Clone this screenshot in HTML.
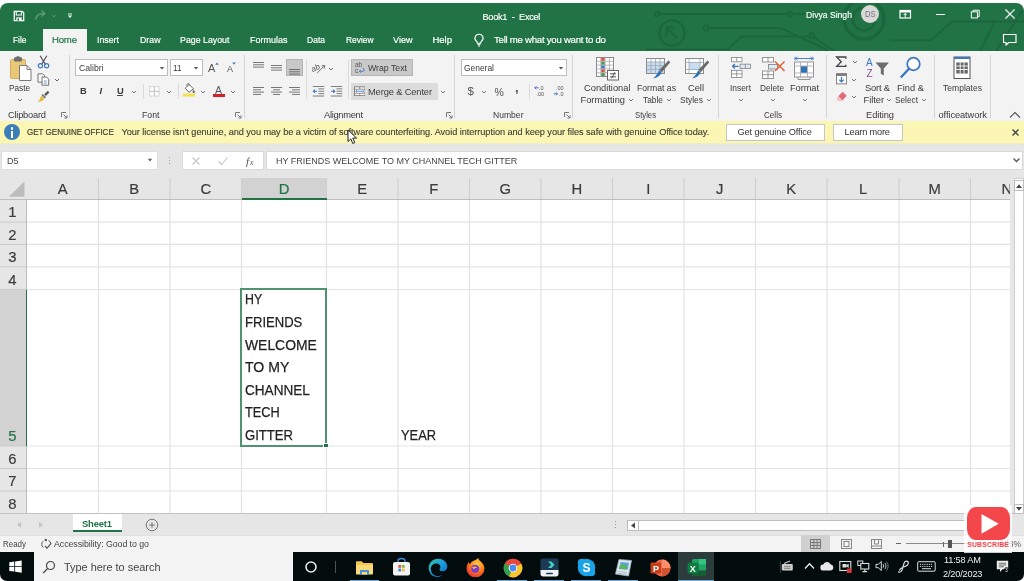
<!DOCTYPE html>
<html><head><meta charset="utf-8"><title>Book1 - Excel</title>
<style>
html,body{margin:0;padding:0;background:#fff;}
body{width:1024px;height:581px;overflow:hidden;position:relative;font-family:"Liberation Sans",sans-serif;}
#w{position:absolute;left:0;top:3px;width:1024px;height:578px;border-radius:8px 8px 7px 7px;overflow:hidden;background:#e6e6e6;}
#o{position:absolute;left:0;top:-3px;width:1024px;height:581px;will-change:transform;filter:blur(.45px);}
.a{position:absolute;display:block;}
.t{position:absolute;white-space:pre;display:block;transform-origin:0 50%;}
</style></head><body><div id="w"><div id="o">
<div class="a" style="left:-4px;top:0px;width:1032px;height:51px;background:#217346;"></div>
<svg class="a" style="left:640px;top:0px;" width="384" height="51" viewBox="640 0 384 51"><g fill="none" stroke="#1b653c" stroke-width="2" stroke-linecap="round" opacity=".85">
<circle cx="657" cy="14" r="2.300"/><path d="M659.500 14H787.500M792.500 14h12"/><circle cx="790" cy="14" r="2.300"/>
<circle cx="672" cy="33" r="12.500" stroke-width="2.400"/><path d="M666.500 27.500l10 10M666.500 27.500h7.500M666.500 27.500v7.500" stroke-width="2.400"/>
<circle cx="706" cy="28" r="2.500"/><path d="M708.500 28H781l46 22"/>
<path d="M647 49.500h81l13-13h68"/><circle cx="812" cy="35.800" r="2.500"/><path d="M814 37.500l21 14"/>
<circle cx="864" cy="19" r="20" stroke-width="3.500"/><circle cx="864" cy="19" r="11.500" stroke-width="2.500"/>
<path d="M890 40.300h41l21-18.800h72"/><path d="M980 51l15-29.500M996 51l26-40"/>
</g></svg>
<svg class="a" style="left:13px;top:10px;" width="12" height="12" viewBox="0 0 14 14"><path d="M1.500 1.500h9.200l1.800 1.800v9.200h-11z" fill="none" stroke="#fff" stroke-width="1.500"/><path d="M3.800 1.500v4.300h6v-4.300" fill="none" stroke="#fff" stroke-width="1.200"/><rect x="3.800" y="8.600" width="6.400" height="3.900" fill="#fff"/><rect x="5.200" y="9.900" width="1.900" height="2.600" fill="#217346"/></svg>
<svg class="a" style="left:34px;top:9px;" width="14" height="12" viewBox="0 0 14 12"><path d="M2 10.5c0-4 3-6 8-6M7.5 1.5l3.2 3-3.2 3" fill="none" stroke="#5c9a78" stroke-width="1.4"/></svg>
<svg class="a" style="left:49.5px;top:11.5px" width="8" height="8" viewBox="-4 -4 8 8"><path d="M-1.8 -0.9L0 0.9L1.8 -0.9" fill="none" stroke="#5c9a78" stroke-width="1"/></svg>
<svg class="a" style="left:67px;top:13px;" width="6" height="6" viewBox="0 0 6 6"><path d="M1 1h4" stroke="#fff" stroke-width=".9"/><path d="M.8 2.600h4.400L3 5z" fill="#fff"/></svg>
<span class="t" style="left:482.5px;top:13px;font-size:9.2px;line-height:9.2px;color:#fff;letter-spacing:-0.277px;-webkit-text-stroke:.15px #fff;">Book1  -  Excel</span>
<span class="t" style="left:806px;top:11px;font-size:9.2px;line-height:9.2px;color:#fff;transform:scaleX(0.937);-webkit-text-stroke:.15px #fff;">Divya Singh</span>
<div class="a" style="left:861px;top:4.5px;width:18px;height:18.0px;background:#d9d9d9;border-radius:50%;"></div>
<span class="t" style="left:864.8px;top:11px;font-size:8.2px;line-height:8.2px;color:#7b6f78;transform:scaleX(0.9305);">DS</span>
<svg class="a" style="left:899px;top:9px;" width="13" height="11" viewBox="0 0 13 11"><rect x="1" y="1.5" width="10.5" height="7.5" fill="none" stroke="#fff" stroke-width="1.2"/><rect x="1" y="1.5" width="10.5" height="2" fill="#fff"/><path d="M6.2 4.5v4M4.6 6l1.6-1.6L7.8 6" fill="none" stroke="#fff" stroke-width="1"/></svg>
<div class="a" style="left:936px;top:13.6px;width:8.5px;height:1.2px;background:#fff;"></div>
<svg class="a" style="left:970px;top:9px;" width="10.5" height="10.5" viewBox="0 0 12 12"><rect x="1.5" y="3.2" width="7" height="7" fill="none" stroke="#fff" stroke-width="1.1"/><path d="M3.5 3V1.4h7V8.5H9" fill="none" stroke="#fff" stroke-width="1.1"/></svg>
<svg class="a" style="left:1004px;top:8px;" width="12" height="12" viewBox="0 0 12 12"><path d="M1.5 1.5l9 9M10.5 1.5l-9 9" stroke="#fff" stroke-width="1.2"/></svg>
<svg class="a" style="left:1002px;top:33px;" width="16" height="13" viewBox="0 0 16 13"><path d="M1.5 1.5h12.5v8H6.8L4 12V9.5H1.5z" fill="none" stroke="#fff" stroke-width="1.2" stroke-linejoin="round"/></svg>
<div class="a" style="left:43px;top:29px;width:44px;height:22px;background:#f3f3f3;"></div>
<span class="t" style="left:12.5px;top:35px;font-size:9.6px;line-height:9.6px;color:#fff;transform:scaleX(0.8727);-webkit-text-stroke:.18px #fff;">File</span>
<span class="t" style="left:52px;top:35px;font-size:9.6px;line-height:9.6px;color:#217346;letter-spacing:-0.203px;-webkit-text-stroke:.18px #217346;">Home</span>
<span class="t" style="left:97px;top:35px;font-size:9.6px;line-height:9.6px;color:#fff;transform:scaleX(0.9163);-webkit-text-stroke:.18px #fff;">Insert</span>
<span class="t" style="left:139.5px;top:35px;font-size:9.6px;line-height:9.6px;color:#fff;transform:scaleX(0.9151);-webkit-text-stroke:.18px #fff;">Draw</span>
<span class="t" style="left:180px;top:35px;font-size:9.6px;line-height:9.6px;color:#fff;transform:scaleX(0.9182);-webkit-text-stroke:.18px #fff;">Page Layout</span>
<span class="t" style="left:249.5px;top:35px;font-size:9.6px;line-height:9.6px;color:#fff;transform:scaleX(0.9373);-webkit-text-stroke:.18px #fff;">Formulas</span>
<span class="t" style="left:307px;top:35px;font-size:9.6px;line-height:9.6px;color:#fff;transform:scaleX(0.8877);-webkit-text-stroke:.18px #fff;">Data</span>
<span class="t" style="left:345.5px;top:35px;font-size:9.6px;line-height:9.6px;color:#fff;transform:scaleX(0.8737);-webkit-text-stroke:.18px #fff;">Review</span>
<span class="t" style="left:393px;top:35px;font-size:9.6px;line-height:9.6px;color:#fff;transform:scaleX(0.945);-webkit-text-stroke:.18px #fff;">View</span>
<span class="t" style="left:432.5px;top:35px;font-size:9.6px;line-height:9.6px;color:#fff;letter-spacing:-0.081px;-webkit-text-stroke:.18px #fff;">Help</span>
<svg class="a" style="left:473px;top:33px;" width="12" height="14" viewBox="0 0 12 14"><path d="M6 1.2a4 4 0 0 0-2.3 7.3c.5.5.7 1 .7 1.7h3.2c0-.7.2-1.2.7-1.7A4 4 0 0 0 6 1.2z" fill="none" stroke="#fff" stroke-width="1.1"/><path d="M4.6 11.6h2.8M5 13h2" stroke="#fff" stroke-width="1"/></svg>
<span class="t" style="left:494px;top:35px;font-size:9.6px;line-height:9.6px;color:#fff;letter-spacing:-0.249px;-webkit-text-stroke:.18px #fff;">Tell me what you want to do</span>
<div class="a" style="left:-4px;top:51px;width:1032px;height:70px;background:#f3f3f3;"></div>
<div class="a" style="left:-4px;top:120.5px;width:1032px;height:0.8px;background:#d6d6d6;"></div>
<svg class="a" style="left:9px;top:56px;" width="24" height="26" viewBox="0 0 24 26"><rect x="1.5" y="3.5" width="15" height="19" rx="1" fill="#e8c877" stroke="#c8a24a" stroke-width=".8"/>
<rect x="5" y="1.2" width="8" height="4.2" rx="1" fill="#6d6d6d"/><rect x="7.5" y=".3" width="3" height="2" fill="#6d6d6d"/>
<path d="M10.5 9.5h7.5l4 4V24.5h-11.5z" fill="#fff" stroke="#7a7a7a" stroke-width="1"/><path d="M18 9.5v4h4" fill="none" stroke="#7a7a7a" stroke-width="1"/></svg>
<span class="t" style="left:9px;top:84px;font-size:9.3px;line-height:9.3px;color:#3a3a3a;transform:scaleX(0.883);">Paste</span>
<svg class="a" style="left:15.5px;top:95.5px" width="8" height="8" viewBox="-4 -4 8 8"><path d="M-2 -1.0L0 1.0L2 -1.0" fill="none" stroke="#666" stroke-width="1"/></svg>
<svg class="a" style="left:37px;top:55px;" width="13" height="14" viewBox="0 0 13 14"><path d="M3.2 .8l5.2 8.6M9.8 .8L4.6 9.4" stroke="#555" stroke-width="1.2" fill="none"/>
<circle cx="3.4" cy="10.8" r="2.1" fill="none" stroke="#3b78c2" stroke-width="1.2"/><circle cx="9.6" cy="10.8" r="2.1" fill="none" stroke="#3b78c2" stroke-width="1.2"/></svg>
<svg class="a" style="left:36.5px;top:72.5px;" width="13" height="13" viewBox="0 0 13 13"><path d="M1 .8h4.6l2 2v6.4H1z" fill="#fff" stroke="#6f6f6f" stroke-width="1"/>
<path d="M5 4h4.5l2.2 2.2v6H5z" fill="#fff" stroke="#6f6f6f" stroke-width="1"/><path d="M6.8 8h3M6.8 10h3" stroke="#5b8fd0" stroke-width=".9"/></svg>
<svg class="a" style="left:53px;top:75.5px" width="8" height="8" viewBox="-4 -4 8 8"><path d="M-2 -1.0L0 1.0L2 -1.0" fill="none" stroke="#666" stroke-width="1"/></svg>
<svg class="a" style="left:37px;top:89.5px;" width="13" height="13" viewBox="0 0 13 13"><path d="M7.2 4.2l3.6-3.4 1.6 1.7-3.5 3.5z" fill="#5a5a5a"/><path d="M5.8 4l3.4 3.3-1.4 1.3L4.5 5.2z" fill="#777"/>
<path d="M4.2 5.6l3.2 3.2C6 11 3.6 12 .8 11.8 2.6 10.2 3.4 8 4.2 5.6z" fill="#e5b93c"/></svg>
<span class="t" style="left:8px;top:111px;font-size:9.3px;line-height:9.3px;color:#3a3a3a;letter-spacing:-0.226px;">Clipboard</span>
<svg class="a" style="left:60.5px;top:112px;" width="7" height="7" viewBox="0 0 7 7"><path d="M.5 5V.5H5" fill="none" stroke="#777" stroke-width="1"/><path d="M2.6 2.6L6 6M6 3.4V6H3.4" fill="none" stroke="#777" stroke-width="1"/></svg>
<div class="a" style="left:69.0px;top:55px;width:1.0px;height:62.5px;background:#d4d4d4;"></div>
<div class="a" style="left:75px;top:59px;width:93px;height:17px;background:#fff;border:1px solid #bdbdbd;box-sizing:border-box;"></div>
<span class="t" style="left:78.5px;top:64px;font-size:9.3px;line-height:9.3px;color:#3a3a3a;transform:scaleX(0.9296);">Calibri</span>
<svg class="a" style="left:158px;top:64.2px" width="8" height="8" viewBox="-4 -4 8 8"><path d="M-2.2 -1.1L2.2 -1.1L0 1.54Z" fill="#555"/></svg>
<div class="a" style="left:170px;top:59px;width:33px;height:17px;background:#fff;border:1px solid #bdbdbd;box-sizing:border-box;"></div>
<span class="t" style="left:173px;top:64px;font-size:9.3px;line-height:9.3px;color:#3a3a3a;transform:scaleX(0.8804);">11</span>
<svg class="a" style="left:192px;top:64.2px" width="8" height="8" viewBox="-4 -4 8 8"><path d="M-2.2 -1.1L2.2 -1.1L0 1.54Z" fill="#555"/></svg>
<span class="t" style="left:208px;top:63px;font-size:11px;line-height:11px;color:#555;">A</span>
<svg class="a" style="left:214.8px;top:61.8px;" width="4" height="3" viewBox="0 0 4 3"><path d="M.2 2.800L2 .4l1.800 2.400z" fill="#3b78c2"/></svg>
<span class="t" style="left:227px;top:65px;font-size:9px;line-height:9px;color:#555;">A</span>
<svg class="a" style="left:232px;top:62px;" width="4" height="3" viewBox="0 0 4 3"><path d="M.2.400h3.600L2 2.800z" fill="#3b78c2"/></svg>
<span class="t" style="left:80px;top:87px;font-size:9.3px;line-height:9.3px;color:#3a3a3a;font-weight:bold;">B</span>
<span class="t" style="left:99.6px;top:87px;font-size:9.3px;line-height:9.3px;color:#3a3a3a;font-weight:bold;font-style:italic;">I</span>
<span class="t" style="left:117px;top:87px;font-size:9.3px;line-height:9.3px;color:#3a3a3a;font-weight:bold;">U</span>
<div class="a" style="left:116.8px;top:95px;width:6.6px;height:1px;background:#444;"></div>
<svg class="a" style="left:129.5px;top:87.5px" width="8" height="8" viewBox="-4 -4 8 8"><path d="M-2 -1.0L0 1.0L2 -1.0" fill="none" stroke="#777" stroke-width="1"/></svg>
<div class="a" style="left:142.5px;top:84px;width:1.0px;height:15px;background:#dadada;"></div>
<svg class="a" style="left:148.8px;top:85.7px;" width="11" height="11" viewBox="0 0 12 12"><rect x=".7" y=".7" width="10.2" height="10.2" fill="#fff" stroke="#b9b9b9" stroke-width="1" stroke-dasharray="1.2 .8"/><path d="M5.8 1v10M1 5.8h10" stroke="#b9b9b9" stroke-width="1"/></svg>
<svg class="a" style="left:164.5px;top:87.5px" width="8" height="8" viewBox="-4 -4 8 8"><path d="M-2 -1.0L0 1.0L2 -1.0" fill="none" stroke="#777" stroke-width="1"/></svg>
<div class="a" style="left:177.5px;top:84px;width:1.0px;height:15px;background:#dadada;"></div>
<svg class="a" style="left:181.7px;top:83.3px;" width="14" height="14" viewBox="0 0 14 14"><path d="M3.2 5.2L7.2 1.4l4.2 4.4-4.4 3.6z" fill="#fff" stroke="#666" stroke-width="1"/><path d="M5.2 3.3c-.6-1.4-.2-2.6.8-2.8s1.6.8 1.6 1.9" fill="none" stroke="#666" stroke-width=".9"/><path d="M11.6 6.6c.8 1.1 1.2 1.8 1.2 2.3a1.1 1.1 0 0 1-2.2 0c0-.5.3-1.200 1-2.300z" fill="#666"/>
<rect x=".8" y="10.6" width="12.2" height="3" fill="#f2e04f"/></svg>
<svg class="a" style="left:199px;top:87.5px" width="8" height="8" viewBox="-4 -4 8 8"><path d="M-2 -1.0L0 1.0L2 -1.0" fill="none" stroke="#777" stroke-width="1"/></svg>
<span class="t" style="left:215px;top:85px;font-size:10.5px;line-height:10.5px;color:#555;">A</span>
<div class="a" style="left:212.8px;top:94px;width:12.4px;height:3.2px;background:#d3232a;"></div>
<svg class="a" style="left:228.5px;top:87.5px" width="8" height="8" viewBox="-4 -4 8 8"><path d="M-2 -1.0L0 1.0L2 -1.0" fill="none" stroke="#777" stroke-width="1"/></svg>
<span class="t" style="left:141.5px;top:111px;font-size:9.3px;line-height:9.3px;color:#3a3a3a;transform:scaleX(0.9404);">Font</span>
<svg class="a" style="left:234.8px;top:112px;" width="7" height="7" viewBox="0 0 7 7"><path d="M.5 5V.5H5" fill="none" stroke="#777" stroke-width="1"/><path d="M2.6 2.6L6 6M6 3.4V6H3.4" fill="none" stroke="#777" stroke-width="1"/></svg>
<div class="a" style="left:244.0px;top:55px;width:1.0px;height:62.5px;background:#d4d4d4;"></div>
<svg class="a" style="left:253px;top:61.8px;" width="11" height="8" viewBox="0 0 11 8"><rect x="0" y="0.0" width="11" height="1" fill="#777"/><rect x="0" y="2.3" width="11" height="1" fill="#777"/><rect x="0" y="4.6" width="11" height="1" fill="#777"/></svg>
<svg class="a" style="left:271px;top:65px;" width="11" height="8" viewBox="0 0 11 8"><rect x="0" y="0.0" width="11" height="1" fill="#777"/><rect x="0" y="2.3" width="11" height="1" fill="#777"/><rect x="0" y="4.6" width="11" height="1" fill="#777"/></svg>
<div class="a" style="left:286px;top:59px;width:17px;height:17px;background:#c8c8c8;border:1px solid #b3b3b3;box-sizing:border-box;"></div>
<svg class="a" style="left:289px;top:68.6px;" width="11" height="8" viewBox="0 0 11 8"><rect x="0" y="0.0" width="11" height="1" fill="#6b6b6b"/><rect x="0" y="2.3" width="11" height="1" fill="#6b6b6b"/><rect x="0" y="4.6" width="11" height="1" fill="#6b6b6b"/></svg>
<svg class="a" style="left:311.5px;top:61px;" width="15" height="13" viewBox="0 0 15 13"><text x="0" y="10" font-size="8" font-style="italic" font-family="Liberation Sans,sans-serif" fill="#555" transform="rotate(-28 3 9)">ab</text><path d="M5 12.200L12.600 4.600M12.800 4.400l-3.300.6M12.800 4.400l-.6 3.300" stroke="#777" stroke-width="1" fill="none"/></svg>
<svg class="a" style="left:326.5px;top:64.5px" width="8" height="8" viewBox="-4 -4 8 8"><path d="M-2 -1.0L0 1.0L2 -1.0" fill="none" stroke="#777" stroke-width="1"/></svg>
<div class="a" style="left:306.0px;top:60px;width:1.0px;height:39px;background:#dadada;"></div>
<div class="a" style="left:347.5px;top:60px;width:1.0px;height:39px;background:#dadada;"></div>
<div class="a" style="left:351px;top:59px;width:62px;height:17px;background:#c9c9c9;border:1px solid #b5b5b5;box-sizing:border-box;"></div>
<svg class="a" style="left:354.5px;top:62px;" width="10" height="12" viewBox="0 0 10 12"><text x="0" y="5.300" font-size="6.500" font-family="Liberation Sans,sans-serif" fill="#555">ab</text><text x="0" y="11" font-size="6.500" font-family="Liberation Sans,sans-serif" fill="#555">c</text><path d="M4.500 9.300h3.300a1.500 1.500 0 0 0 0-3" fill="none" stroke="#3b78c2" stroke-width=".9"/><path d="M5.800 7.900L4.300 9.300l1.500 1.400" fill="none" stroke="#3b78c2" stroke-width=".9"/></svg>
<span class="t" style="left:368px;top:64px;font-size:9.3px;line-height:9.3px;color:#3a3a3a;transform:scaleX(0.9392);">Wrap Text</span>
<svg class="a" style="left:253px;top:87.3px;" width="11" height="10" viewBox="0 0 11 10"><rect x="0" y="0.0" width="11" height="1" fill="#777"/><rect x="0" y="2.3" width="8" height="1" fill="#777"/><rect x="0" y="4.6" width="11" height="1" fill="#777"/><rect x="0" y="6.8999999999999995" width="8" height="1" fill="#777"/></svg>
<svg class="a" style="left:271px;top:87.3px;" width="11" height="10" viewBox="0 0 11 10"><rect x="0.0" y="0.0" width="11" height="1" fill="#777"/><rect x="2.0" y="2.3" width="7" height="1" fill="#777"/><rect x="0.0" y="4.6" width="11" height="1" fill="#777"/><rect x="2.0" y="6.8999999999999995" width="7" height="1" fill="#777"/></svg>
<svg class="a" style="left:289px;top:87.3px;" width="11" height="10" viewBox="0 0 11 10"><rect x="0" y="0.0" width="11" height="1" fill="#777"/><rect x="3" y="2.3" width="8" height="1" fill="#777"/><rect x="0" y="4.6" width="11" height="1" fill="#777"/><rect x="3" y="6.8999999999999995" width="8" height="1" fill="#777"/></svg>
<svg class="a" style="left:312px;top:86px;" width="13" height="10.5" viewBox="0 0 13 11"><path d="M.5.500h12M6.500 3h6M6.500 5.500h6M6.500 8h6M.5 10.500h12" stroke="#777" stroke-width="1"/><path d="M5 5.500H1.200M2.800 3.800L1.100 5.500l1.700 1.700" fill="none" stroke="#3b78c2" stroke-width="1.100"/></svg>
<svg class="a" style="left:330px;top:86px;" width="13" height="10.5" viewBox="0 0 13 11"><path d="M.5.500h12M6.500 3h6M6.500 5.500h6M6.500 8h6M.5 10.500h12" stroke="#777" stroke-width="1"/><path d="M.8 5.500h3.800M3 3.800l1.700 1.700L3 7.200" fill="none" stroke="#3b78c2" stroke-width="1.100"/></svg>
<div class="a" style="left:351px;top:83px;width:86.5px;height:17px;background:#dcdcdc;"></div>
<svg class="a" style="left:353.5px;top:85.7px;" width="11.5" height="10.5" viewBox="0 0 13 11"><rect x=".5" y=".5" width="12" height="10" fill="#fff" stroke="#777" stroke-width="1"/><path d="M.5 3.200h12M.5 7.800h12M6.500 .5v2.700M6.500 7.800v2.700" stroke="#777" stroke-width=".9"/><path d="M2 5.500h9M3.300 4.300L2 5.500l1.300 1.200M9.700 4.300L11 5.500 9.700 6.700" fill="none" stroke="#3b78c2" stroke-width=".9"/></svg>
<span class="t" style="left:368px;top:88px;font-size:9.3px;line-height:9.3px;color:#3a3a3a;letter-spacing:-0.127px;">Merge &amp; Center</span>
<svg class="a" style="left:438.5px;top:87.5px" width="8" height="8" viewBox="-4 -4 8 8"><path d="M-2 -1.0L0 1.0L2 -1.0" fill="none" stroke="#777" stroke-width="1"/></svg>
<span class="t" style="left:324px;top:111px;font-size:9.3px;line-height:9.3px;color:#3a3a3a;letter-spacing:-0.294px;">Alignment</span>
<svg class="a" style="left:445.5px;top:112px;" width="7" height="7" viewBox="0 0 7 7"><path d="M.5 5V.5H5" fill="none" stroke="#777" stroke-width="1"/><path d="M2.6 2.6L6 6M6 3.4V6H3.4" fill="none" stroke="#777" stroke-width="1"/></svg>
<div class="a" style="left:454.0px;top:55px;width:1.0px;height:62.5px;background:#d4d4d4;"></div>
<div class="a" style="left:461px;top:59px;width:106px;height:17px;background:#fff;border:1px solid #bdbdbd;box-sizing:border-box;"></div>
<span class="t" style="left:464px;top:64px;font-size:9.3px;line-height:9.3px;color:#3a3a3a;transform:scaleX(0.9067);">General</span>
<svg class="a" style="left:557px;top:64.2px" width="8" height="8" viewBox="-4 -4 8 8"><path d="M-2.2 -1.1L2.2 -1.1L0 1.54Z" fill="#555"/></svg>
<span class="t" style="left:467.5px;top:86px;font-size:11.5px;line-height:11.5px;color:#555;">$</span>
<svg class="a" style="left:479.5px;top:87.5px" width="8" height="8" viewBox="-4 -4 8 8"><path d="M-2 -1.0L0 1.0L2 -1.0" fill="none" stroke="#777" stroke-width="1"/></svg>
<span class="t" style="left:494.5px;top:87px;font-size:10.5px;line-height:10.5px;color:#555;">%</span>
<span class="t" style="left:515px;top:81px;font-size:13px;line-height:13px;color:#555;font-weight:bold;">,</span>
<div class="a" style="left:528.5px;top:84px;width:1.0px;height:15px;background:#dadada;"></div>
<svg class="a" style="left:534px;top:84.7px;" width="13" height="12" viewBox="0 0 13 12"><text x="5" y="5" font-size="5.500" font-family="Liberation Sans,sans-serif" fill="#555">.0</text><text x="2.500" y="11" font-size="5.500" font-family="Liberation Sans,sans-serif" fill="#555">.00</text><path d="M4.500 2.800H.8M2.300 1.300L.8 2.800l1.500 1.500" fill="none" stroke="#3b78c2" stroke-width="1"/></svg>
<svg class="a" style="left:552.5px;top:84.7px;" width="13" height="12" viewBox="0 0 13 12"><text x="3" y="5" font-size="5.500" font-family="Liberation Sans,sans-serif" fill="#555">.00</text><text x="6" y="11" font-size="5.500" font-family="Liberation Sans,sans-serif" fill="#555">.0</text><path d="M.8 8.800h3.700M3 7.300l1.500 1.500L3 10.300" fill="none" stroke="#3b78c2" stroke-width="1"/></svg>
<span class="t" style="left:492.5px;top:111px;font-size:9.3px;line-height:9.3px;color:#3a3a3a;transform:scaleX(0.9221);">Number</span>
<svg class="a" style="left:564px;top:112px;" width="7" height="7" viewBox="0 0 7 7"><path d="M.5 5V.5H5" fill="none" stroke="#777" stroke-width="1"/><path d="M2.6 2.6L6 6M6 3.4V6H3.4" fill="none" stroke="#777" stroke-width="1"/></svg>
<div class="a" style="left:572.0px;top:55px;width:1.0px;height:62.5px;background:#d4d4d4;"></div>
<svg class="a" style="left:596px;top:56.5px;" width="24" height="24" viewBox="0 0 24 24"><rect x=".5" y=".5" width="17" height="19" fill="#fff" stroke="#8a8a8a" stroke-width="1"/>
<path d="M.5 4.300h17M.5 8.100h17M.5 11.900h17M.5 15.700h17M4.800 .5v19M9.100 .5v19M13.400 .5v19" stroke="#a9a9a9" stroke-width=".8"/>
<rect x="5.200" y=".9" width="3.500" height="3" fill="#d9534f"/><rect x="5.200" y="4.700" width="3.500" height="3" fill="#4a9a5b"/><rect x="5.200" y="8.500" width="3.500" height="3" fill="#3b78c2"/><rect x="5.200" y="12.300" width="3.500" height="3" fill="#d9534f"/><rect x="5.200" y="16.100" width="3.500" height="3" fill="#4a9a5b"/>
<rect x="11.500" y="13.500" width="11" height="9.500" fill="#fff" stroke="#666" stroke-width="1"/><path d="M14 16.800h6M14 19.800h6M18.800 15.200l-3.200 6.200" stroke="#555" stroke-width="1" fill="none"/></svg>
<span class="t" style="left:584px;top:84px;font-size:9.3px;line-height:9.3px;color:#3a3a3a;">Conditional</span>
<span class="t" style="left:580.5px;top:96px;font-size:9.3px;line-height:9.3px;color:#3a3a3a;letter-spacing:0.006px;">Formatting</span>
<svg class="a" style="left:626.5px;top:96px" width="8" height="8" viewBox="-4 -4 8 8"><path d="M-2 -1.0L0 1.0L2 -1.0" fill="none" stroke="#777" stroke-width="1"/></svg>
<svg class="a" style="left:646px;top:56.5px;" width="25" height="24" viewBox="0 0 25 24"><rect x=".5" y="1.500" width="18" height="15" fill="#fff" stroke="#8a8a8a" stroke-width="1"/><rect x="1" y="5" width="17" height="11" fill="#c9dcf0"/>
<path d="M.5 5h18M.5 8.700h18M.5 12.400h18M5 1.500v15M9.500 1.500v15M14 1.500v15" stroke="#9aa7b5" stroke-width=".8"/>
<path d="M22.500 3.500l1.800 1.800-8.500 10-2.600-2.400z" fill="#6a6a6a"/><path d="M13 13.200l2.600 2.400c-1.400 3.400-4.400 5.400-8.600 5.900 2.800-2.300 4.800-4.900 6-8.300z" fill="#2e75b6"/></svg>
<span class="t" style="left:637px;top:84px;font-size:9.3px;line-height:9.3px;color:#3a3a3a;transform:scaleX(0.9317);">Format as</span>
<span class="t" style="left:643px;top:96px;font-size:9.3px;line-height:9.3px;color:#3a3a3a;transform:scaleX(0.8996);">Table</span>
<svg class="a" style="left:664.5px;top:96px" width="8" height="8" viewBox="-4 -4 8 8"><path d="M-2 -1.0L0 1.0L2 -1.0" fill="none" stroke="#777" stroke-width="1"/></svg>
<svg class="a" style="left:685px;top:56.5px;" width="25" height="24" viewBox="0 0 25 24"><rect x=".5" y="1.500" width="18" height="15" fill="#fff" stroke="#8a8a8a" stroke-width="1"/><rect x="4" y="5.500" width="11" height="7" fill="#c9dcf0" stroke="#9aa7b5" stroke-width=".8"/>
<path d="M.5 5.500h3.500M.5 12.500h3.500M15 5.500h3.500M15 12.500h3.500M4 1.500v4M15 1.500v4M4 12.500v4M15 12.500v4" stroke="#9aa7b5" stroke-width=".8"/>
<path d="M22.500 3.500l1.800 1.800-8.500 10-2.600-2.400z" fill="#6a6a6a"/><path d="M13 13.200l2.600 2.400c-1.400 3.400-4.400 5.400-8.600 5.900 2.800-2.300 4.800-4.900 6-8.300z" fill="#2e75b6"/></svg>
<span class="t" style="left:688px;top:84px;font-size:9.3px;line-height:9.3px;color:#3a3a3a;letter-spacing:-0.007px;">Cell</span>
<span class="t" style="left:680px;top:96px;font-size:9.3px;line-height:9.3px;color:#3a3a3a;transform:scaleX(0.9082);">Styles</span>
<svg class="a" style="left:704.5px;top:96px" width="8" height="8" viewBox="-4 -4 8 8"><path d="M-2 -1.0L0 1.0L2 -1.0" fill="none" stroke="#777" stroke-width="1"/></svg>
<span class="t" style="left:635px;top:111px;font-size:9.3px;line-height:9.3px;color:#3a3a3a;transform:scaleX(0.8292);">Styles</span>
<div class="a" style="left:718.2px;top:55px;width:1.0px;height:62.5px;background:#d4d4d4;"></div>
<svg class="a" style="left:730.5px;top:56.5px;" width="21" height="21" viewBox="0 0 22 22"><rect x=".5" y=".5" width="11" height="4.500" fill="#fff" stroke="#8a8a8a" stroke-width=".9"/><path d="M6 .5v4.500" stroke="#8a8a8a" stroke-width=".9"/>
<rect x="9.500" y="7.500" width="11" height="4.500" fill="#dfe9f5" stroke="#8a8a8a" stroke-width=".9"/><path d="M15 7.500v4.500" stroke="#8a8a8a" stroke-width=".9"/>
<rect x=".5" y="14" width="11" height="7.500" fill="#fff" stroke="#8a8a8a" stroke-width=".9"/><path d="M6 14v7.500M.5 17.700h11" stroke="#8a8a8a" stroke-width=".9"/>
<path d="M8 9.700H1.800M4 7.400L1.700 9.700 4 12" fill="none" stroke="#3b78c2" stroke-width="1.300"/></svg>
<span class="t" style="left:730px;top:84px;font-size:9.3px;line-height:9.3px;color:#3a3a3a;transform:scaleX(0.9029);">Insert</span>
<svg class="a" style="left:736.5px;top:95.5px" width="8" height="8" viewBox="-4 -4 8 8"><path d="M-2 -1.0L0 1.0L2 -1.0" fill="none" stroke="#777" stroke-width="1"/></svg>
<svg class="a" style="left:761.5px;top:56.5px;" width="24" height="22" viewBox="0 0 24 22"><rect x=".5" y=".5" width="11" height="4.500" fill="#fff" stroke="#8a8a8a" stroke-width=".9"/><path d="M6 .5v4.500" stroke="#8a8a8a" stroke-width=".9"/>
<rect x="6.500" y="7.500" width="9" height="4.500" fill="#dfe9f5" stroke="#8a8a8a" stroke-width=".9"/>
<rect x=".5" y="14" width="11" height="7.500" fill="#fff" stroke="#8a8a8a" stroke-width=".9"/><path d="M6 14v7.500M.5 17.700h11" stroke="#8a8a8a" stroke-width=".9"/>
<path d="M13 4.500l9.500 9.500M22.500 4.500L13 14" stroke="#e2582d" stroke-width="1.400" fill="none"/></svg>
<span class="t" style="left:760px;top:84px;font-size:9.3px;line-height:9.3px;color:#3a3a3a;transform:scaleX(0.8928);">Delete</span>
<svg class="a" style="left:768.5px;top:95.5px" width="8" height="8" viewBox="-4 -4 8 8"><path d="M-2 -1.0L0 1.0L2 -1.0" fill="none" stroke="#777" stroke-width="1"/></svg>
<svg class="a" style="left:792.5px;top:55.5px;" width="24" height="24" viewBox="0 0 24 24"><path d="M2 2.500h18M2 .8v3.400M20 .8v3.400M4.500 1l-2 1.500 2 1.500M17.500 1l2 1.500-2 1.500" fill="none" stroke="#3b78c2" stroke-width=".9"/>
<rect x="1.500" y="6" width="19" height="15" fill="#fff" stroke="#8a8a8a" stroke-width=".9"/><path d="M1.500 10h19M1.500 17h19M7.500 6v15M14.500 6v15" stroke="#a5a5a5" stroke-width=".8"/>
<rect x="8" y="10.300" width="6" height="6.400" fill="#2e75b6"/><path d="M5 21v2.500h12V21" fill="none" stroke="#8a8a8a" stroke-width=".9"/></svg>
<span class="t" style="left:790px;top:84px;font-size:9.3px;line-height:9.3px;color:#3a3a3a;letter-spacing:-0.091px;">Format</span>
<svg class="a" style="left:800.5px;top:95.5px" width="8" height="8" viewBox="-4 -4 8 8"><path d="M-2 -1.0L0 1.0L2 -1.0" fill="none" stroke="#777" stroke-width="1"/></svg>
<span class="t" style="left:764px;top:111px;font-size:9.3px;line-height:9.3px;color:#3a3a3a;transform:scaleX(0.8708);">Cells</span>
<div class="a" style="left:825.5px;top:55px;width:1.0px;height:62.5px;background:#d4d4d4;"></div>
<svg class="a" style="left:835px;top:55.5px;" width="13" height="11.5" viewBox="0 0 15 13"><path d="M12.500 3V1H1.800l5.400 5.500L1.800 12h10.700v-2" fill="none" stroke="#444" stroke-width="1.500"/></svg>
<svg class="a" style="left:851px;top:58px" width="8" height="8" viewBox="-4 -4 8 8"><path d="M-2 -1.0L0 1.0L2 -1.0" fill="none" stroke="#777" stroke-width="1"/></svg>
<svg class="a" style="left:835.5px;top:73px;" width="11.5" height="12" viewBox="0 0 13 13"><rect x=".5" y=".5" width="11.500" height="11.500" fill="#fff" stroke="#777" stroke-width="1"/><rect x=".5" y=".5" width="11.500" height="2.500" fill="#777"/><path d="M6.200 4v5.500M3.800 7.300l2.400 2.400 2.400-2.400" fill="none" stroke="#3b78c2" stroke-width="1.400"/></svg>
<svg class="a" style="left:849.5px;top:75.5px" width="8" height="8" viewBox="-4 -4 8 8"><path d="M-2 -1.0L0 1.0L2 -1.0" fill="none" stroke="#777" stroke-width="1"/></svg>
<svg class="a" style="left:836px;top:91px;" width="11.5" height="10.5" viewBox="0 0 13 12"><path d="M7.500 .8l4.700 4.700-5 5.300-4.700-4.700z" fill="#e56b7c"/><path d="M2.500 6.100l4.700 4.700-1.200 1H3L.8 9.600c-.4-.4-.4-1 0-1.400z" fill="#f4c1c8"/></svg>
<svg class="a" style="left:849.5px;top:93px" width="8" height="8" viewBox="-4 -4 8 8"><path d="M-2 -1.0L0 1.0L2 -1.0" fill="none" stroke="#777" stroke-width="1"/></svg>
<svg class="a" style="left:865.5px;top:56px;" width="24" height="23" viewBox="0 0 24 23"><text x="0" y="9.500" font-size="10" font-family="Liberation Sans,sans-serif" fill="#3b78c2">A</text><text x=".5" y="20.500" font-size="10" font-family="Liberation Sans,sans-serif" fill="#8b4a9c">Z</text>
<path d="M9.500 6.500h13.500l-5.200 6v7l-3 -1.800v-5.200z" fill="#6d6d6d"/></svg>
<span class="t" style="left:865px;top:84px;font-size:9.3px;line-height:9.3px;color:#3a3a3a;letter-spacing:-0.169px;">Sort &amp;</span>
<span class="t" style="left:863.5px;top:96px;font-size:9.3px;line-height:9.3px;color:#3a3a3a;letter-spacing:-0.033px;">Filter</span>
<svg class="a" style="left:885px;top:96px" width="8" height="8" viewBox="-4 -4 8 8"><path d="M-2 -1.0L0 1.0L2 -1.0" fill="none" stroke="#777" stroke-width="1"/></svg>
<svg class="a" style="left:899.5px;top:56px;" width="22" height="23" viewBox="0 0 22 23"><circle cx="13.500" cy="8" r="6.300" fill="#fff" stroke="#3b78c2" stroke-width="1.700"/><path d="M9 12.800L1.500 20.800" stroke="#3b78c2" stroke-width="2.400" stroke-linecap="round"/></svg>
<span class="t" style="left:897px;top:84px;font-size:9.3px;line-height:9.3px;color:#3a3a3a;letter-spacing:0.024px;">Find &amp;</span>
<span class="t" style="left:895px;top:96px;font-size:9.3px;line-height:9.3px;color:#3a3a3a;transform:scaleX(0.8898);">Select</span>
<svg class="a" style="left:919.5px;top:96px" width="8" height="8" viewBox="-4 -4 8 8"><path d="M-2 -1.0L0 1.0L2 -1.0" fill="none" stroke="#777" stroke-width="1"/></svg>
<span class="t" style="left:866px;top:111px;font-size:9.3px;line-height:9.3px;color:#3a3a3a;letter-spacing:-0.073px;">Editing</span>
<div class="a" style="left:933.5px;top:55px;width:1.0px;height:62.5px;background:#d4d4d4;"></div>
<svg class="a" style="left:953px;top:55.5px;" width="19" height="24" viewBox="0 0 19 24"><rect x="1" y="1" width="16" height="21.500" fill="#fff" stroke="#555" stroke-width="1"/><rect x="1" y="1" width="16" height="2" fill="#3b78c2"/>
<rect x="3.300" y="6.500" width="11.500" height="11" fill="#666"/><path d="M3.300 10h11.500M3.300 13.500h11.500M7.200 6.500v11M11 6.500v11" stroke="#fff" stroke-width=".9"/></svg>
<span class="t" style="left:943px;top:84px;font-size:9.3px;line-height:9.3px;color:#3a3a3a;transform:scaleX(0.9201);">Templates</span>
<span class="t" style="left:938.5px;top:111px;font-size:9.3px;line-height:9.3px;color:#3a3a3a;letter-spacing:-0.087px;">officeatwork</span>
<div class="a" style="left:989.5px;top:55px;width:1.0px;height:62.5px;background:#d4d4d4;"></div>
<svg class="a" style="left:1009px;top:110.5px;" width="12" height="8" viewBox="0 0 12 8"><path d="M1 6.500L6 1.500l5 5" fill="none" stroke="#555" stroke-width="1.100"/></svg>
<div class="a" style="left:-4px;top:121.3px;width:1032px;height:21.7px;background:#fbf6b3;"></div>
<div class="a" style="left:-4px;top:143px;width:1032px;height:1px;background:#efedc8;"></div>
<div class="a" style="left:3.8px;top:124.3px;width:16.2px;height:16.2px;background:#3c7db8;border-radius:50%;"></div>
<div class="a" style="left:10.7px;top:127.2px;width:2.4px;height:2.4px;background:#fff;border-radius:50%;"></div>
<div class="a" style="left:10.8px;top:130.7px;width:2.2px;height:7.1px;background:#fff;"></div>
<span class="t" style="left:27px;top:127px;font-size:9.4px;line-height:9.4px;color:#3f3f30;transform:scaleX(0.8557);-webkit-text-stroke:.2px #3f3f30;">GET GENUINE OFFICE</span>
<span class="t" style="left:121.5px;top:128px;font-size:9.2px;line-height:9.2px;color:#3f3f32;letter-spacing:-0.055px;-webkit-text-stroke:.12px #3f3f32;">Your license isn't genuine, and you may be a victim of software counterfeiting. Avoid interruption and keep your files safe with genuine Office today.</span>
<div class="a" style="left:725.5px;top:124px;width:99.5px;height:16.5px;background:#fff;border:1px solid #c6c6c6;box-sizing:border-box;"></div>
<span class="t" style="left:737.5px;top:128px;font-size:9.2px;line-height:9.2px;color:#333;letter-spacing:-0.12px;">Get genuine Office</span>
<div class="a" style="left:832.5px;top:124px;width:70.5px;height:16.5px;background:#fff;border:1px solid #c6c6c6;box-sizing:border-box;"></div>
<span class="t" style="left:844.5px;top:128px;font-size:9.2px;line-height:9.2px;color:#333;letter-spacing:-0.172px;">Learn more</span>
<svg class="a" style="left:1011px;top:127.5px;" width="9" height="9" viewBox="0 0 9 9"><path d="M1.500 1.500l6 6M7.500 1.500l-6 6" stroke="#444" stroke-width="1.400"/></svg>
<div class="a" style="left:-4px;top:144px;width:1032px;height:34px;background:#e6e6e6;"></div>
<div class="a" style="left:1px;top:151px;width:157px;height:19px;background:#fff;border:1px solid #dedede;box-sizing:border-box;"></div>
<span class="t" style="left:6.5px;top:156px;font-size:9.8px;line-height:9.8px;color:#444;transform:scaleX(0.918);">D5</span>
<svg class="a" style="left:146px;top:156px" width="8" height="8" viewBox="-4 -4 8 8"><path d="M-2.3 -1.15L2.3 -1.15L0 1.6099999999999999Z" fill="#666"/></svg>
<div class="a" style="left:169px;top:156.5px;width:1.2px;height:1.2px;background:#9a9a9a;"></div>
<div class="a" style="left:169px;top:159.5px;width:1.2px;height:1.2px;background:#9a9a9a;"></div>
<div class="a" style="left:169px;top:162.5px;width:1.2px;height:1.2px;background:#9a9a9a;"></div>
<div class="a" style="left:181.5px;top:151px;width:82.5px;height:19px;background:#fff;border:1px solid #d9d9d9;box-sizing:border-box;"></div>
<svg class="a" style="left:190.5px;top:155.5px;" width="10" height="10" viewBox="0 0 10 10"><path d="M1.500 1.500l7 7M8.500 1.500l-7 7" stroke="#c4c4c4" stroke-width="1.100"/></svg>
<svg class="a" style="left:216.5px;top:155.5px;" width="12" height="10" viewBox="0 0 12 10"><path d="M1.500 5.500l3 3 6-7" fill="none" stroke="#c4c4c4" stroke-width="1.100"/></svg>
<span class="t" style="left:246px;top:156px;font-size:11px;line-height:11px;color:#555;font-style:italic;font-family:'Liberation Serif',serif;">f</span>
<span class="t" style="left:250px;top:159px;font-size:7.5px;line-height:7.5px;color:#555;font-style:italic;font-family:'Liberation Serif',serif;">x</span>
<div class="a" style="left:266px;top:151px;width:757px;height:19px;background:#fff;border:1px solid #d9d9d9;box-sizing:border-box;"></div>
<span class="t" style="left:275.5px;top:156px;font-size:9.6px;line-height:9.6px;color:#444;transform:scaleX(0.938);">HY FRIENDS WELCOME TO MY CHANNEL TECH GITTER</span>
<svg class="a" style="left:1012px;top:157px;" width="9" height="7" viewBox="0 0 9 7"><path d="M1.500 1.500l3 3 3-3" fill="none" stroke="#555" stroke-width="1.300"/></svg>
<div class="a" style="left:-4px;top:178px;width:1017.5px;height:336px;background:#e6e6e6;"></div>
<div class="a" style="left:27px;top:199px;width:983px;height:315px;background:#fff;"></div>
<div class="a" style="left:241.5px;top:178px;width:85.0px;height:21px;background:#d2d2d2;"></div>
<div class="a" style="left:-4px;top:289.5px;width:31px;height:156.5px;background:#d2d2d2;"></div>
<svg class="a" style="left:0px;top:0px;" width="1014" height="516" viewBox="0 0 1014 516"><path d="M98.5 199V514" stroke="#e3e3e3" stroke-width="1.200"/><path d="M98.5 178V199" stroke="#cdcdcd" stroke-width="1.100"/><path d="M170 199V514" stroke="#e3e3e3" stroke-width="1.200"/><path d="M170 178V199" stroke="#cdcdcd" stroke-width="1.100"/><path d="M241.5 199V514" stroke="#e3e3e3" stroke-width="1.200"/><path d="M241.5 178V199" stroke="#cdcdcd" stroke-width="1.100"/><path d="M326.5 199V514" stroke="#e3e3e3" stroke-width="1.200"/><path d="M326.5 178V199" stroke="#cdcdcd" stroke-width="1.100"/><path d="M398 199V514" stroke="#e3e3e3" stroke-width="1.200"/><path d="M398 178V199" stroke="#cdcdcd" stroke-width="1.100"/><path d="M469.5 199V514" stroke="#e3e3e3" stroke-width="1.200"/><path d="M469.5 178V199" stroke="#cdcdcd" stroke-width="1.100"/><path d="M541 199V514" stroke="#e3e3e3" stroke-width="1.200"/><path d="M541 178V199" stroke="#cdcdcd" stroke-width="1.100"/><path d="M612.5 199V514" stroke="#e3e3e3" stroke-width="1.200"/><path d="M612.5 178V199" stroke="#cdcdcd" stroke-width="1.100"/><path d="M684 199V514" stroke="#e3e3e3" stroke-width="1.200"/><path d="M684 178V199" stroke="#cdcdcd" stroke-width="1.100"/><path d="M755.5 199V514" stroke="#e3e3e3" stroke-width="1.200"/><path d="M755.5 178V199" stroke="#cdcdcd" stroke-width="1.100"/><path d="M827 199V514" stroke="#e3e3e3" stroke-width="1.200"/><path d="M827 178V199" stroke="#cdcdcd" stroke-width="1.100"/><path d="M899 199V514" stroke="#e3e3e3" stroke-width="1.200"/><path d="M899 178V199" stroke="#cdcdcd" stroke-width="1.100"/><path d="M970.5 199V514" stroke="#e3e3e3" stroke-width="1.200"/><path d="M970.5 178V199" stroke="#cdcdcd" stroke-width="1.100"/><path d="M27 222.1H1010" stroke="#e3e3e3" stroke-width="1.200"/><path d="M0 222.1H27" stroke="#cdcdcd" stroke-width="1.100"/><path d="M27 244.4H1010" stroke="#e3e3e3" stroke-width="1.200"/><path d="M0 244.4H27" stroke="#cdcdcd" stroke-width="1.100"/><path d="M27 266.9H1010" stroke="#e3e3e3" stroke-width="1.200"/><path d="M0 266.9H27" stroke="#cdcdcd" stroke-width="1.100"/><path d="M27 289.5H1010" stroke="#e3e3e3" stroke-width="1.200"/><path d="M0 289.5H27" stroke="#cdcdcd" stroke-width="1.100"/><path d="M27 446H1010" stroke="#e3e3e3" stroke-width="1.200"/><path d="M0 446H27" stroke="#cdcdcd" stroke-width="1.100"/><path d="M27 468.5H1010" stroke="#e3e3e3" stroke-width="1.200"/><path d="M0 468.5H27" stroke="#cdcdcd" stroke-width="1.100"/><path d="M27 491H1010" stroke="#e3e3e3" stroke-width="1.200"/><path d="M0 491H27" stroke="#cdcdcd" stroke-width="1.100"/></svg>
<div class="a" style="left:-4px;top:198.6px;width:1014px;height:1.1px;background:#bdbdbd;"></div>
<div class="a" style="left:26.4px;top:199px;width:1.0px;height:315px;background:#bdbdbd;"></div>
<div class="a" style="left:241.5px;top:197.5px;width:85.0px;height:2.1px;background:#217346;"></div>
<div class="a" style="left:25.9px;top:289.5px;width:1.6px;height:156.5px;background:#217346;"></div>
<svg class="a" style="left:8px;top:181px;" width="18" height="17" viewBox="0 0 18 17"><path d="M16.500 .6v15.200H.8z" fill="#bdbdbd"/></svg>
<span class="t" style="left:57.81px;top:182px;font-size:14.8px;line-height:14.8px;color:#3c3c3c;-webkit-text-stroke:.2px #3c3c3c;">A</span>
<span class="t" style="left:129.31px;top:182px;font-size:14.8px;line-height:14.8px;color:#3c3c3c;-webkit-text-stroke:.2px #3c3c3c;">B</span>
<span class="t" style="left:200.41px;top:182px;font-size:14.8px;line-height:14.8px;color:#3c3c3c;-webkit-text-stroke:.2px #3c3c3c;">C</span>
<span class="t" style="left:278.66px;top:182px;font-size:14.8px;line-height:14.8px;color:#217346;-webkit-text-stroke:.2px #217346;">D</span>
<span class="t" style="left:357.31px;top:182px;font-size:14.8px;line-height:14.8px;color:#3c3c3c;-webkit-text-stroke:.2px #3c3c3c;">E</span>
<span class="t" style="left:429.23px;top:182px;font-size:14.8px;line-height:14.8px;color:#3c3c3c;-webkit-text-stroke:.2px #3c3c3c;">F</span>
<span class="t" style="left:499.49px;top:182px;font-size:14.8px;line-height:14.8px;color:#3c3c3c;-webkit-text-stroke:.2px #3c3c3c;">G</span>
<span class="t" style="left:571.41px;top:182px;font-size:14.8px;line-height:14.8px;color:#3c3c3c;-webkit-text-stroke:.2px #3c3c3c;">H</span>
<span class="t" style="left:646.19px;top:182px;font-size:14.8px;line-height:14.8px;color:#3c3c3c;-webkit-text-stroke:.2px #3c3c3c;">I</span>
<span class="t" style="left:716.05px;top:182px;font-size:14.8px;line-height:14.8px;color:#3c3c3c;-webkit-text-stroke:.2px #3c3c3c;">J</span>
<span class="t" style="left:786.31px;top:182px;font-size:14.8px;line-height:14.8px;color:#3c3c3c;-webkit-text-stroke:.2px #3c3c3c;">K</span>
<span class="t" style="left:858.88px;top:182px;font-size:14.8px;line-height:14.8px;color:#3c3c3c;-webkit-text-stroke:.2px #3c3c3c;">L</span>
<span class="t" style="left:928.59px;top:182px;font-size:14.8px;line-height:14.8px;color:#3c3c3c;-webkit-text-stroke:.2px #3c3c3c;">M</span>
<span class="t" style="left:1001.5px;top:182px;font-size:14.8px;line-height:14.8px;color:#3c3c3c;-webkit-text-stroke:.2px #3c3c3c;">N</span>
<span class="t" style="left:8.18px;top:205px;font-size:14.8px;line-height:14.8px;color:#3c3c3c;-webkit-text-stroke:.2px #3c3c3c;">1</span>
<span class="t" style="left:8.18px;top:228px;font-size:14.8px;line-height:14.8px;color:#3c3c3c;-webkit-text-stroke:.2px #3c3c3c;">2</span>
<span class="t" style="left:8.18px;top:250px;font-size:14.8px;line-height:14.8px;color:#3c3c3c;-webkit-text-stroke:.2px #3c3c3c;">3</span>
<span class="t" style="left:8.18px;top:273px;font-size:14.8px;line-height:14.8px;color:#3c3c3c;-webkit-text-stroke:.2px #3c3c3c;">4</span>
<span class="t" style="left:8.18px;top:429px;font-size:14.8px;line-height:14.8px;color:#217346;-webkit-text-stroke:.2px #217346;">5</span>
<span class="t" style="left:8.18px;top:452px;font-size:14.8px;line-height:14.8px;color:#3c3c3c;-webkit-text-stroke:.2px #3c3c3c;">6</span>
<span class="t" style="left:8.18px;top:474px;font-size:14.8px;line-height:14.8px;color:#3c3c3c;-webkit-text-stroke:.2px #3c3c3c;">7</span>
<span class="t" style="left:8.18px;top:497px;font-size:14.8px;line-height:14.8px;color:#3c3c3c;-webkit-text-stroke:.2px #3c3c3c;">8</span>
<span class="t" style="left:245.2px;top:291px;font-size:15px;line-height:15px;color:#222;transform:scaleX(0.8254);-webkit-text-stroke:.25px #222;">HY</span>
<span class="t" style="left:245.2px;top:314px;font-size:15px;line-height:15px;color:#222;transform:scaleX(0.8703);-webkit-text-stroke:.25px #222;">FRIENDS</span>
<span class="t" style="left:245.2px;top:337px;font-size:15px;line-height:15px;color:#222;transform:scaleX(0.9264);-webkit-text-stroke:.25px #222;">WELCOME</span>
<span class="t" style="left:245.2px;top:359px;font-size:15px;line-height:15px;color:#222;transform:scaleX(0.938);-webkit-text-stroke:.25px #222;">TO MY</span>
<span class="t" style="left:245.2px;top:382px;font-size:15px;line-height:15px;color:#222;transform:scaleX(0.904);-webkit-text-stroke:.25px #222;">CHANNEL</span>
<span class="t" style="left:245.2px;top:404px;font-size:15px;line-height:15px;color:#222;transform:scaleX(0.8523);-webkit-text-stroke:.25px #222;">TECH</span>
<span class="t" style="left:245.2px;top:427px;font-size:15px;line-height:15px;color:#222;transform:scaleX(0.8728);-webkit-text-stroke:.25px #222;">GITTER</span>
<span class="t" style="left:400.5px;top:427px;font-size:15px;line-height:15px;color:#222;transform:scaleX(0.8568);-webkit-text-stroke:.25px #222;">YEAR</span>
<div class="a" style="left:240px;top:288px;width:87px;height:159px;border:2px solid #4f9370;box-sizing:border-box;"></div>
<div class="a" style="left:323.4px;top:443.2px;width:5.4px;height:5.2px;background:#217346;border:1px solid #fff;box-sizing:border-box;"></div>
<div class="a" style="left:1010px;top:178px;width:3.5px;height:336px;background:#e6e6e6;"></div>
<div class="a" style="left:1013.5px;top:178px;width:10.5px;height:336px;background:#fff;border:1px solid #cfcfcf;box-sizing:border-box;"></div>
<div class="a" style="left:1013.5px;top:180px;width:10.5px;height:10.5px;background:#fff;border:1px solid #bdbdbd;box-sizing:border-box;"></div>
<svg class="a" style="left:1015px;top:182.5px;" width="8" height="6" viewBox="0 0 8 6"><path d="M1 5L4 1.200 7 5z" fill="#444"/></svg>
<div class="a" style="left:1013.5px;top:503.5px;width:10.5px;height:10.5px;background:#fff;border:1px solid #bdbdbd;box-sizing:border-box;"></div>
<svg class="a" style="left:1015px;top:506px;" width="8" height="6" viewBox="0 0 8 6"><path d="M1 1l3 3.800L7 1z" fill="#444"/></svg>
<div class="a" style="left:-4px;top:513.4px;width:1017.5px;height:1.2px;background:#c3c3c3;"></div>
<div class="a" style="left:-4px;top:514.2px;width:1032px;height:20.3px;background:#e6e6e6;"></div>
<svg class="a" style="left:16px;top:520.5px;" width="6" height="8" viewBox="0 0 6 8"><path d="M5 .8v6L1 3.800z" fill="#c4c4c4"/></svg>
<svg class="a" style="left:38px;top:520.5px;" width="6" height="8" viewBox="0 0 6 8"><path d="M1 .8v6l4-3z" fill="#c4c4c4"/></svg>
<div class="a" style="left:72.5px;top:514px;width:49.0px;height:18px;background:#fff;"></div>
<div class="a" style="left:72.5px;top:530px;width:49.0px;height:2px;background:#217346;"></div>
<span class="t" style="left:82px;top:519px;font-size:9.5px;line-height:9.5px;color:#217346;letter-spacing:-0.231px;font-weight:bold;">Sheet1</span>
<svg class="a" style="left:145px;top:517.5px;" width="14" height="14" viewBox="0 0 14 14"><circle cx="7" cy="7" r="5.800" fill="none" stroke="#767676" stroke-width="1"/><path d="M7 4.200v5.600M4.200 7h5.600" stroke="#767676" stroke-width="1.100"/></svg>
<div class="a" style="left:614.5px;top:520.5px;width:1.2px;height:1.2px;background:#9a9a9a;"></div>
<div class="a" style="left:614.5px;top:523.5px;width:1.2px;height:1.2px;background:#9a9a9a;"></div>
<div class="a" style="left:614.5px;top:526.5px;width:1.2px;height:1.2px;background:#9a9a9a;"></div>
<div class="a" style="left:627px;top:519.5px;width:383px;height:11.0px;background:#fff;border:1px solid #bdbdbd;box-sizing:border-box;"></div>
<div class="a" style="left:627px;top:519.5px;width:12px;height:11.0px;background:#fff;border:1px solid #bdbdbd;box-sizing:border-box;"></div>
<svg class="a" style="left:630px;top:521.5px;" width="6" height="7" viewBox="0 0 6 7"><path d="M5 .5v6L1 3.500z" fill="#444"/></svg>
<div class="a" style="left:998px;top:519.5px;width:12px;height:11.0px;background:#fff;border:1px solid #bdbdbd;box-sizing:border-box;"></div>
<svg class="a" style="left:1001px;top:521.5px;" width="6" height="7" viewBox="0 0 6 7"><path d="M1 .5v6l4-3z" fill="#444"/></svg>
<div class="a" style="left:-4px;top:535px;width:1032px;height:17px;background:#f3f3f3;"></div>
<div class="a" style="left:-4px;top:535px;width:1032px;height:1px;background:#e0e0e0;"></div>
<span class="t" style="left:3px;top:540px;font-size:8.8px;line-height:8.8px;color:#444;transform:scaleX(0.9042);">Ready</span>
<svg class="a" style="left:39.5px;top:538px;" width="13" height="11" viewBox="0 0 13 11"><path d="M3.200 3.200A4 4 0 0 0 3.300 9.500" fill="none" stroke="#555" stroke-width="1"/><path d="M8.500 2.400A4 4 0 0 1 10.800 6" fill="none" stroke="#555" stroke-width="1"/><circle cx="5.800" cy="2" r="1.200" fill="#555"/><path d="M5 8l2 2.200 4.200-4.800" fill="none" stroke="#555" stroke-width="1.200"/></svg>
<span class="t" style="left:54px;top:540px;font-size:8.8px;line-height:8.8px;color:#444;letter-spacing:-0.057px;">Accessibility: Good to go</span>
<div class="a" style="left:801px;top:535px;width:29px;height:17px;background:#d0d0d0;"></div>
<svg class="a" style="left:810px;top:538.5px;" width="11" height="10" viewBox="0 0 11 10"><rect x=".5" y=".5" width="10" height="9" fill="none" stroke="#777" stroke-width="1"/><path d="M.5 3.500h10M.5 6.500h10M3.800 .5v9M7.200 .5v9" stroke="#777" stroke-width="1"/></svg>
<svg class="a" style="left:840.5px;top:538.5px;" width="11" height="10" viewBox="0 0 11 10"><rect x=".5" y=".5" width="10" height="9" fill="none" stroke="#888" stroke-width="1"/><rect x="3" y="2.500" width="5" height="5" fill="none" stroke="#888" stroke-width="1"/></svg>
<svg class="a" style="left:870.5px;top:538.5px;" width="11" height="10" viewBox="0 0 11 10"><rect x=".5" y=".5" width="10" height="9" fill="none" stroke="#888" stroke-width="1"/><path d="M3.500 .5v4.500h4V.5M.5 7h10" fill="none" stroke="#888" stroke-width="1"/></svg>
<div class="a" style="left:895.5px;top:543px;width:5.5px;height:1.2px;background:#666;"></div>
<div class="a" style="left:905.5px;top:543.2px;width:99.5px;height:1.0px;background:#8a8a8a;"></div>
<div class="a" style="left:947.5px;top:540px;width:4.5px;height:8px;background:#555;"></div>
<div class="a" style="left:943px;top:541.5px;width:1px;height:5.0px;background:#666;"></div>
<svg class="a" style="left:1003px;top:539px;" width="9" height="9" viewBox="0 0 9 9"><path d="M4.500 1v7M1 4.500h7" stroke="#666" stroke-width="1.200"/></svg>
<span class="t" style="left:999px;top:540px;font-size:8.5px;line-height:8.5px;color:#555;letter-spacing:0.087px;">133%</span>
<div class="a" style="left:-4px;top:552px;width:1032px;height:33px;background:#020c0d;"></div>
<svg class="a" style="left:9px;top:560px;" width="13" height="13" viewBox="0 0 13 13"><path d="M.3 2.200L5.300 1.500v4.700H.3zM6.100 1.400L12.700.4v5.800H6.100zM.3 6.900h5v4.700L.3 10.900zM6.100 6.900h6.600v5.800l-6.600-1z" fill="#fff"/></svg>
<div class="a" style="left:33.5px;top:552px;width:259.2px;height:33px;background:#f3f3f3;"></div>
<svg class="a" style="left:42px;top:559.5px;" width="14" height="14" viewBox="0 0 14 14"><circle cx="8.500" cy="5.500" r="4" fill="none" stroke="#444" stroke-width="1.200"/><path d="M5.700 8.400L1.200 13" stroke="#444" stroke-width="1.300"/></svg>
<span class="t" style="left:63.5px;top:561px;font-size:11.6px;line-height:11.6px;color:#444;transform:scaleX(0.9412);">Type here to search</span>
<svg class="a" style="left:303.5px;top:560px;" width="14" height="14" viewBox="0 0 14 14"><circle cx="7" cy="7" r="5" fill="none" stroke="#e8e8e8" stroke-width="1.600"/></svg>
<div class="a" style="left:334.5px;top:561px;width:1.2px;height:12px;background:#4a5354;"></div>
<svg class="a" style="left:355px;top:558.5px;" width="19" height="17" viewBox="0 0 19 17"><path d="M1 3.500c0-.8.500-1.300 1.300-1.300h4.500l1.500 1.700h8.400c.8 0 1.300.5 1.300 1.300v8.800H1z" fill="#f4c64f"/><path d="M1 6h17v8.500c0 .6-.4 1-1 1H2c-.6 0-1-.4-1-1z" fill="#f9d978"/><path d="M5 11h9v4.500H5z" fill="#4a90d9"/><path d="M7 13h5v2.500H7z" fill="#f9d978"/></svg>
<svg class="a" style="left:391.5px;top:557px;" width="19" height="20" viewBox="0 0 19 20"><path d="M6 5.500V3.800C6 2.600 7 1.500 9.500 1.500S13 2.600 13 3.800v1.700" fill="none" stroke="#3c8ad8" stroke-width="1.400"/><rect x="1" y="5" width="17" height="13.500" rx="2" fill="#f3f3f3"/><rect x="6.300" y="8" width="2.800" height="2.800" fill="#e8553d"/><rect x="9.900" y="8" width="2.800" height="2.800" fill="#7cbb3f"/><rect x="6.300" y="11.600" width="2.800" height="2.800" fill="#3c8ad8"/><rect x="9.900" y="11.600" width="2.800" height="2.800" fill="#f6b93b"/></svg>
<svg class="a" style="left:428px;top:557.5px;" width="20" height="19" viewBox="0 0 20 19"><defs><linearGradient id="eg" x1="0" y1="0" x2="1" y2="1"><stop offset="0" stop-color="#36c3a0"/><stop offset=".5" stop-color="#1b9de2"/><stop offset="1" stop-color="#0b5fb0"/></linearGradient></defs><path d="M10 .8c5 0 9.300 3.300 9.300 8 0 2.700-2 4.500-4.600 4.500-2 0-3.200-.8-3.200-1.800 0-.8.900-1 .9-2.500 0-2-1.800-3.500-4.200-3.500-3 0-5.400 2.300-5.400 5.800 0 4 3.300 6.800 7.300 6.800 1.600 0 3-.3 4.300-1-1.600 1.400-3.200 1.900-5 1.900C4.500 19 .7 15 .7 10 .7 5 4.700.8 10 .8z" fill="url(#eg)"/></svg>
<svg class="a" style="left:466px;top:557.5px;" width="19" height="19" viewBox="0 0 19 19"><defs><radialGradient id="fg" cx=".6" cy=".3" r=".8"><stop offset="0" stop-color="#ffd43b"/><stop offset=".5" stop-color="#ff7a1a"/><stop offset="1" stop-color="#e3203f"/></radialGradient></defs><path d="M9.500 2C11 .8 12 .3 12.500 0c0 1.800 1 2.500 2.800 4 2 1.700 3.200 4 3.200 6.500a9 9 0 0 1-18 0C.5 7 2 4.800 3 4c0 1 .4 1.600 1 2 .8-2 2.800-3.200 5.500-4z" fill="url(#fg)"/><circle cx="9.200" cy="10.800" r="4" fill="#7a3fd1"/><path d="M6 9.500c1.500-1.500 4-1.200 5.500.3-1.500-.3-2.500 0-3 1.200-1-.2-2-.6-2.500-1.500z" fill="#ffb13b"/></svg>
<svg class="a" style="left:502.5px;top:557.5px;" width="20" height="20" viewBox="0 0 20 20"><circle cx="10" cy="10" r="9.300" fill="#e9473a"/><path d="M10 10L1.900 5.400A9.300 9.300 0 0 0 6 18.400z" fill="#2fa24f"/><path d="M10 10l-4 8.400A9.300 9.300 0 0 0 18.100 5.400z" fill="#f7c52d"/><path d="M10 10L1.900 5.400A9.300 9.300 0 0 1 18.100 5.400z" fill="#e9473a"/><circle cx="10" cy="10" r="4.300" fill="#fff"/><circle cx="10" cy="10" r="3.400" fill="#4a8af4"/></svg>
<svg class="a" style="left:539.5px;top:557.5px;" width="19" height="19" viewBox="0 0 19 19"><rect x=".5" y=".5" width="18" height="13" rx="2" fill="#1c3a55"/><path d="M8 3.500h3.500l3 3.200-3 3.300H8l3-3.300z" fill="#3fd1c2"/><path d="M.5 12h18v4c0 1.500-1 2.500-2.500 2.500H3C1.500 18.500.5 17.500.5 16z" fill="#eef2f5"/><rect x="6" y="14.800" width="7" height="1.500" rx=".7" fill="#1c3a55"/></svg>
<svg class="a" style="left:576.5px;top:558px;" width="19" height="19" viewBox="0 0 19 19"><circle cx="9.500" cy="9.500" r="8.800" fill="#1aa3e8"/><circle cx="4.800" cy="4.800" r="4" fill="#1aa3e8"/><circle cx="14.200" cy="14.200" r="4" fill="#1aa3e8"/><text x="5.600" y="13.800" font-size="12" font-weight="bold" font-family="Liberation Sans,sans-serif" fill="#fff">S</text></svg>
<svg class="a" style="left:613.5px;top:558px;" width="19" height="19" viewBox="0 0 19 19"><path d="M5 1.500l12.500 1-3 15.500L1.500 16z" fill="#dfe7ee" stroke="#9fb0bf" stroke-width=".8"/><path d="M6.500 4l8.500.8-1.300 7-8.700-.8z" fill="#5aa7e0"/><path d="M6 7.500l4-2 3.500 3.500-1 2.500-7.500-.7z" fill="#62b45a"/><path d="M4 13.500l9 .9M3.600 15.300l9 .9" stroke="#9fb0bf" stroke-width=".8"/></svg>
<svg class="a" style="left:649.5px;top:557.5px;" width="21" height="20" viewBox="0 0 21 20"><circle cx="12" cy="10" r="8.500" fill="#ed6c47"/><path d="M12 1.500A8.500 8.500 0 0 1 20.500 10H12z" fill="#ff8f6b"/><path d="M12 18.500A8.500 8.500 0 0 0 20.500 10H12z" fill="#d35230"/><rect x=".5" y="4.500" width="10.500" height="11" rx="1.200" fill="#c43e1c"/><text x="3" y="13.500" font-size="9" font-weight="bold" font-family="Liberation Sans,sans-serif" fill="#fff">P</text></svg>
<div class="a" style="left:678px;top:552px;width:36px;height:33px;background:#2c3b3b;"></div>
<svg class="a" style="left:687px;top:557.5px;" width="20" height="20" viewBox="0 0 20 20"><rect x="5" y="1" width="14" height="17" rx="1.500" fill="#21a366"/><rect x="12" y="1" width="7" height="5.700" fill="#33c481"/><rect x="5" y="6.700" width="7" height="5.700" fill="#107c41"/><rect x="12" y="6.700" width="7" height="5.700" fill="#21a366"/><rect x="5" y="12.400" width="14" height="5.600" fill="#185c37"/><rect x=".5" y="4.500" width="10.500" height="11" rx="1.200" fill="#107c41"/><text x="2.800" y="13.500" font-size="9" font-weight="bold" font-family="Liberation Sans,sans-serif" fill="#fff">X</text></svg>
<div class="a" style="left:350px;top:580px;width:28.5px;height:5px;background:#6aa9da;"></div>
<div class="a" style="left:497px;top:580px;width:30px;height:5px;background:#6aa9da;"></div>
<div class="a" style="left:534px;top:580px;width:30px;height:5px;background:#6aa9da;"></div>
<div class="a" style="left:570.5px;top:580px;width:30.5px;height:5px;background:#6aa9da;"></div>
<div class="a" style="left:607.5px;top:580px;width:30.5px;height:5px;background:#6aa9da;"></div>
<div class="a" style="left:678px;top:580px;width:36px;height:5px;background:#6aa9da;"></div>
<div class="a" style="left:779.5px;top:561px;width:1.0px;height:12px;background:#303a3b;"></div>
<svg class="a" style="left:781px;top:560px;" width="13" height="12" viewBox="0 0 13 12"><rect x=".8" y="4" width="11" height="6.500" rx="1" fill="#cfcfcf"/><path d="M3 3.500l6-2.500" stroke="#cfcfcf" stroke-width="1.200"/><path d="M3 6.300h6.500M3 8.300h6.500" stroke="#6a6a6a" stroke-width=".8"/></svg>
<svg class="a" style="left:803.5px;top:562px;" width="11" height="8" viewBox="0 0 11 8"><path d="M1 6.500L5.500 1.800 10 6.500" fill="none" stroke="#eee" stroke-width="1.300"/></svg>
<svg class="a" style="left:820px;top:561px;" width="14" height="10" viewBox="0 0 14 10"><path d="M3.500 9.500a3 3 0 0 1-.3-6 4 4 0 0 1 7.300-.3 3.200 3.200 0 0 1 .3 6.300z" fill="#e8e8e8"/></svg>
<svg class="a" style="left:838.5px;top:559.5px;" width="14" height="14" viewBox="0 0 14 14"><rect x=".8" y="1.500" width="11" height="9" fill="none" stroke="#ddd" stroke-width="1.100"/><rect x="3.500" y="4" width="4" height="3.500" fill="#ddd"/><path d="M7.500 5l2.200-1.300v4.200L7.500 6.600z" fill="#ddd"/><rect x="8" y="8.500" width="4.500" height="4.500" fill="#e0303a"/></svg>
<svg class="a" style="left:857px;top:560px;" width="13" height="13" viewBox="0 0 13 13"><rect x=".8" y="1" width="5" height="4.500" fill="none" stroke="#ddd" stroke-width="1"/><rect x="3.800" y="3.500" width="8" height="5.500" fill="#020c0d" stroke="#ddd" stroke-width="1.100"/><path d="M7.800 9v2.300M5.500 11.600h4.600" stroke="#ddd" stroke-width="1.100"/></svg>
<svg class="a" style="left:874.5px;top:560px;" width="14" height="12" viewBox="0 0 14 12"><path d="M1 4.300h2.300L6.300 1.500v9L3.300 7.700H1z" fill="none" stroke="#ddd" stroke-width="1"/><path d="M8 4.200c.8.900.8 2.700 0 3.600M9.800 2.800c1.500 1.800 1.500 4.600 0 6.400" fill="none" stroke="#ddd" stroke-width=".9"/><path d="M11.600 1.600c2 2.600 2 6.200 0 8.800" fill="none" stroke="#888" stroke-width=".9"/></svg>
<svg class="a" style="left:895.5px;top:559.5px;" width="14" height="14" viewBox="0 0 14 14"><path d="M2 12c2.500.5 4-1 4.500-3.500L8 3.500c.3-1.500 1.200-2.300 2.300-2.300 1.200 0 2 .8 2 1.800 0 1.500-1.500 2.800-4 3.800-2.800 1.100-4.800 2-4.800 3.700" fill="none" stroke="#ddd" stroke-width="1.200"/></svg>
<svg class="a" style="left:916.5px;top:560.5px;" width="19" height="11" viewBox="0 0 19 11"><rect x=".7" y=".7" width="17.500" height="9.500" rx="1" fill="none" stroke="#ddd" stroke-width="1"/><path d="M3 3.300h13M3 5.400h13" stroke="#ddd" stroke-width="1" stroke-dasharray="1.200 1"/><path d="M5 7.700h9" stroke="#ddd" stroke-width="1"/></svg>
<span class="t" style="left:944px;top:556px;font-size:9.2px;line-height:9.2px;color:#f0f0f0;letter-spacing:-0.17px;">11:58 AM</span>
<span class="t" style="left:943px;top:570px;font-size:9.2px;line-height:9.2px;color:#f0f0f0;letter-spacing:-0.179px;">2/20/2023</span>
<svg class="a" style="left:995.5px;top:560px;" width="13" height="13" viewBox="0 0 13 13"><path d="M.8.800h11.400v8.400H6.500L4 12V9.200H.8z" fill="#f0f0f0"/><path d="M2.800 3.200h7.400M2.800 5h7.400M2.800 6.800h5" stroke="#444" stroke-width=".8"/><circle cx="10.500" cy="9.500" r="2.300" fill="#020c0d"/><text x="9" y="11.500" font-size="5" font-family="Liberation Sans,sans-serif" fill="#eee">3</text></svg>
<div class="a" style="left:964px;top:505px;width:48px;height:47.5px;background:rgba(255,255,255,.8);"></div>
<div class="a" style="left:967px;top:506.5px;width:42.5px;height:33.0px;background:#f4474b;border-radius:9px/11px;"></div>
<svg class="a" style="left:980px;top:512.5px;" width="20" height="22" viewBox="0 0 20 22"><path d="M1.500 1L18.700 10.700 1.500 20.700z" fill="#fff"/></svg>
<span class="t" style="left:967.2px;top:542px;font-size:6.9px;line-height:6.9px;color:#f4474b;letter-spacing:0.145px;font-weight:bold;">SUBSCRIBE</span>
<svg class="a" style="left:346.5px;top:128.5px;" width="11" height="16" viewBox="0 0 11 16"><path d="M1 1v11.500l2.800-2.600 2 4.600 2-.9-2-4.500h3.800z" fill="#fff" stroke="#222" stroke-width="1" stroke-linejoin="round"/></svg>
</div></div></body></html>
